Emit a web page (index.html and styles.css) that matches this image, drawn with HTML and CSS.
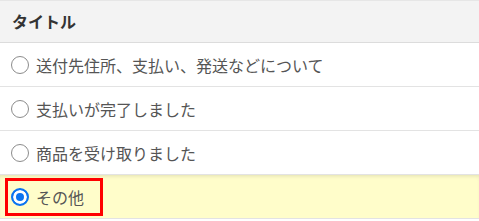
FILE: index.html
```html
<!DOCTYPE html>
<html lang="ja">
<head>
    <meta charset="UTF-8">
    <title>タイトル</title>
    <link rel="stylesheet" href="styles.css">
</head>
<body>
    <div class="panel">
        <div class="panel-head">タイトル</div>
        <div class="choice">
            <label class="choice-label"><input type="radio" name="topic">送付先住所、支払い、発送などについて</label>
        </div>
        <div class="choice">
            <label class="choice-label"><input type="radio" name="topic">支払いが完了しました</label>
        </div>
        <div class="choice">
            <label class="choice-label"><input type="radio" name="topic">商品を受け取りました</label>
        </div>
        <div class="choice selected">
            <label class="choice-label marked"><input type="radio" name="topic" checked>その他</label>
        </div>
    </div>
</body>
</html>
```
FILE: styles.css
```css
body {
    margin: 0;
    padding: 0;
    background-color: #fff;
    font-family: "Noto Sans CJK JP", "Noto Sans", sans-serif;
    color: #555;
}
.panel {
    border-top: 1px solid #e6e6e6;
    border-bottom: 1px solid #e3e3e3;
}
.panel-head {
    height: 41px;
    line-height: 40px;
    padding-left: 12px;
    background-color: #f3f3f3;
    border-bottom: 1px solid #dcdcdc;
    font-size: 16px;
    font-weight: bold;
    color: #333;
}
.choice {
    height: 43px;
    display: flex;
    align-items: center;
    padding-left: 5px;
    border-bottom: 1px solid #e3e3e3;
}
.choice:last-child {
    border-bottom: none;
}
.choice.selected {
    background-color: #fffdca;
    box-shadow: inset 0 3px 4px -2px rgba(0, 0, 0, 0.12);
}
.choice-label {
    display: flex;
    align-items: center;
    height: 32px;
    padding-right: 16px;
    border: 3px solid transparent;
    font-size: 16px;
    white-space: nowrap;
}
.choice-label.marked {
    border-color: #f00;
    margin-top: 1px;
}
.choice-label input {
    appearance: none;
    -webkit-appearance: none;
    box-sizing: border-box;
    width: 18px;
    height: 18px;
    margin: 0 7px 0 3px;
    border: 1.5px solid #8c8c8c;
    border-radius: 50%;
    background-color: #fff;
}
.choice-label input:checked {
    border: 2px solid #0b74f0;
    background-color: #0b74f0;
    box-shadow: inset 0 0 0 3px #fff;
}
```
